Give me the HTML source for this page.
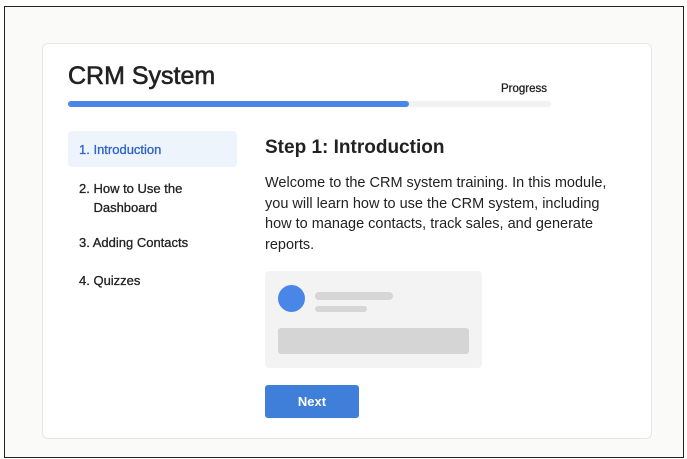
<!DOCTYPE html>
<html><head><style>
*{margin:0;padding:0;box-sizing:border-box}
body{width:687px;height:459px;background:#fff;font-family:"Liberation Sans",sans-serif;position:relative;overflow:hidden}
.frame{position:absolute;left:4px;top:6px;width:680px;height:452px;border:1.5px solid #222;background:#fafaf8}
.card{position:absolute;left:42px;top:43px;width:610px;height:396px;background:#fff;border:1px solid #e6e6e6;border-radius:6px}
.a{position:absolute}
.s{-webkit-text-stroke:0.3px currentColor}
</style></head><body>
<div class="frame"></div>
<div class="card"></div>
<div class="a s" style="left:68px;top:62px;font-size:25px;color:#222;-webkit-text-stroke:0.6px #222">CRM System</div>
<div class="a s" style="left:501px;top:83px;font-size:11.5px;color:#222;">Progress</div>
<div class="a" style="left:68px;top:101px;width:483px;height:6px;background:#f2f2f2;border-radius:3px"></div>
<div class="a" style="left:68px;top:101px;width:341px;height:6px;background:#4a86e8;border-radius:3px"></div>
<div class="a" style="left:68px;top:131px;width:169px;height:36px;background:#eef4fc;border-radius:4px"></div>
<div class="a s" style="left:79px;top:142px;font-size:13px;color:#2f62c9">1. Introduction</div>
<div class="a s" style="left:79px;top:179px;font-size:13px;color:#222;line-height:19px">2. How to Use the<br>&nbsp;&nbsp;&nbsp;&nbsp;Dashboard</div>
<div class="a s" style="left:79px;top:235px;font-size:13px;color:#222">3. Adding Contacts</div>
<div class="a s" style="left:79px;top:273px;font-size:13px;color:#222">4. Quizzes</div>
<div class="a" style="left:265px;top:137px;font-size:19px;font-weight:bold;color:#222">Step 1: Introduction</div>
<div class="a" style="left:265px;top:173px;width:350px;font-size:14.5px;line-height:20.7px;color:#222">Welcome to the CRM system training. In this module, you will learn how to use the CRM system, including how to manage contacts, track sales, and generate reports.</div>
<div class="a" style="left:265px;top:271px;width:217px;height:97px;background:#f3f3f3;border-radius:4px"></div>
<div class="a" style="left:278px;top:285px;width:27px;height:27px;background:#4a86e8;border-radius:50%"></div>
<div class="a" style="left:315px;top:292px;width:78px;height:8px;background:#d6d6d6;border-radius:4px"></div>
<div class="a" style="left:315px;top:306px;width:52px;height:6px;background:#d6d6d6;border-radius:3px"></div>
<div class="a" style="left:278px;top:328px;width:191px;height:26px;background:#d5d5d6;border-radius:3px"></div>
<div class="a" style="left:265px;top:385px;width:94px;height:33px;background:#3f7fd9;border-radius:3px;color:#fff;font-size:13px;font-weight:bold;text-align:center;line-height:33px">Next</div>
</body></html>
